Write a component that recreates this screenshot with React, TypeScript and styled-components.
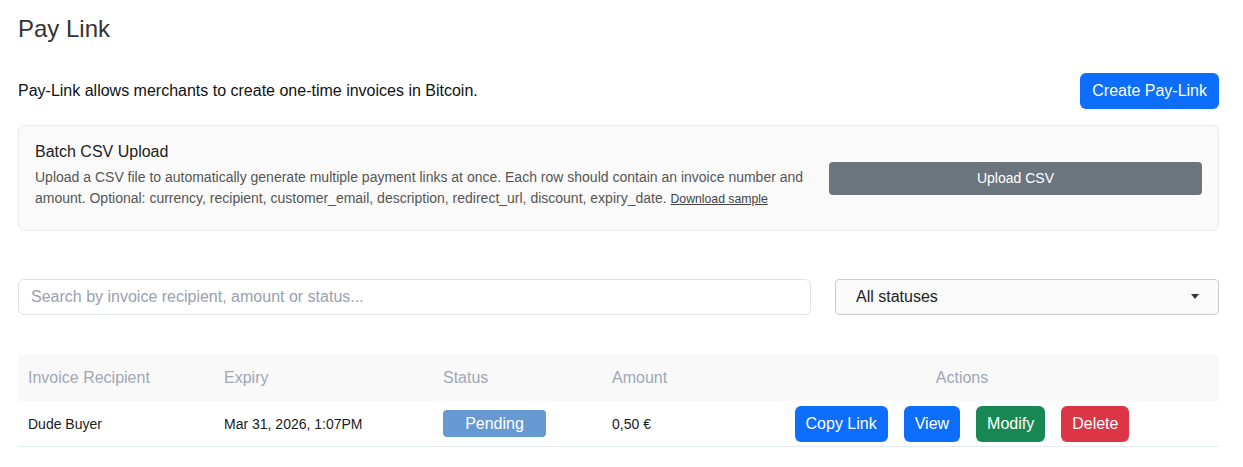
import styled, { createGlobalStyle } from "styled-components";

const GlobalStyle = createGlobalStyle`
  body {
    margin: 0;
    background: #ffffff;
    font-family: "Liberation Sans", Arial, Helvetica, sans-serif;
    color: #212529;
  }
`;

const Page = styled.div`
  width: 1201px;
  padding: 15px 0 0 18px;
`;

const Title = styled.h1`
  margin: 0;
  font-size: 24px;
  font-weight: 400;
  line-height: 1.2;
  color: #333333;
`;

const IntroRow = styled.div`
  display: flex;
  align-items: center;
  justify-content: space-between;
  margin-top: 29px;
`;

const IntroText = styled.p`
  margin: 0;
  font-size: 16px;
  line-height: 24px;
  color: #111111;
`;

const Button = styled.button<{ $variant?: "primary" | "secondary" | "success" | "danger" }>`
  border: none;
  border-radius: 6px;
  padding: 6px 11px;
  font-family: inherit;
  font-size: 16px;
  line-height: 24px;
  color: #ffffff;
  cursor: pointer;
  background: ${({ $variant }) =>
    $variant === "secondary"
      ? "#6c757d"
      : $variant === "success"
      ? "#198754"
      : $variant === "danger"
      ? "#dc3545"
      : "#0d6efd"};
`;

const CreateButton = styled(Button)`
  padding: 6px 12px;
`;

const UploadCard = styled.div`
  margin-top: 16px;
  background: #fafafa;
  border: 1px solid #ebebeb;
  border-radius: 6px;
  padding: 16px;
  display: grid;
  grid-template-columns: 770px 1fr;
  column-gap: 24px;
  align-items: center;
`;

const CardText = styled.div`
  padding-bottom: 4px;
`;

const CardTitle = styled.div`
  font-size: 16px;
  line-height: 19px;
  color: #222222;
  margin-bottom: 6px;
`;

const CardDesc = styled.p`
  margin: 0;
  font-size: 14px;
  line-height: 21px;
  color: #555555;
`;

const SampleLink = styled.a`
  font-size: 12.25px;
  color: #444444;
  text-decoration: underline;
`;

const UploadButton = styled(Button)`
  width: 100%;
  font-size: 14px;
  line-height: 21px;
  border-radius: 4px;
  margin-top: 1px;
`;

const FilterRow = styled.div`
  margin-top: 48px;
  display: grid;
  grid-template-columns: 793px 1fr;
  column-gap: 24px;
`;

const SearchInput = styled.input`
  box-sizing: border-box;
  height: 36px;
  width: 100%;
  border: 1px solid #dfe2e6;
  border-radius: 6px;
  padding: 0 12px;
  font-family: inherit;
  font-size: 16px;
  color: #212529;
  outline: none;
  &::placeholder {
    color: #9aa1ad;
  }
`;

const SelectBox = styled.div`
  box-sizing: border-box;
  height: 36px;
  border: 1px solid #cccccc;
  border-radius: 4px;
  background: #fafafa;
  padding: 0 19px 0 20px;
  display: flex;
  align-items: center;
  justify-content: space-between;
  font-size: 16px;
  color: #222222;
`;

const Caret = styled.span`
  width: 0;
  height: 0;
  border-left: 4.5px solid transparent;
  border-right: 4.5px solid transparent;
  border-top: 5px solid #333333;
`;

const Table = styled.table`
  margin-top: 40px;
  width: 100%;
  border-collapse: collapse;
  table-layout: fixed;
`;

const HeadCell = styled.th<{ $center?: boolean; $width?: number }>`
  box-sizing: border-box;
  background: #f9f9f9;
  height: 46px;
  padding: 0 10px;
  font-size: 16px;
  font-weight: 400;
  color: #a0a7b5;
  text-align: ${({ $center }) => ($center ? "center" : "left")};
  width: ${({ $width }) => ($width ? `${$width}px` : "auto")};
`;

const BodyRow = styled.tr`
  border-bottom: 1px solid #e4eaf2;
`;

const Cell = styled.td<{ $center?: boolean }>`
  box-sizing: border-box;
  height: 46px;
  padding: 0 10px;
  font-size: 14px;
  color: #1a1a1a;
  text-align: ${({ $center }) => ($center ? "center" : "left")};
`;

const Badge = styled.span`
  display: inline-block;
  width: 103px;
  height: 27px;
  line-height: 27px;
  border-radius: 4px;
  background: #6699d2;
  color: #ffffff;
  font-size: 16px;
  text-align: center;
  vertical-align: middle;
`;

const Actions = styled.div`
  display: flex;
  justify-content: center;
  gap: 16px;
`;

export default function App() {
  return (
    <>
      <GlobalStyle />
      <Page>
        <Title>Pay Link</Title>
        <IntroRow>
          <IntroText>Pay-Link allows merchants to create one-time invoices in Bitcoin.</IntroText>
          <CreateButton>Create Pay-Link</CreateButton>
        </IntroRow>

        <UploadCard>
          <CardText>
            <CardTitle>Batch CSV Upload</CardTitle>
            <CardDesc>
              Upload a CSV file to automatically generate multiple payment links at once. Each row
              should contain an invoice number and amount. Optional: currency, recipient,
              customer_email, description, redirect_url, discount, expiry_date.{" "}
              <SampleLink href="#">Download sample</SampleLink>
            </CardDesc>
          </CardText>
          <UploadButton $variant="secondary">Upload CSV</UploadButton>
        </UploadCard>

        <FilterRow>
          <SearchInput placeholder="Search by invoice recipient, amount or status..." />
          <SelectBox>
            All statuses
            <Caret />
          </SelectBox>
        </FilterRow>

        <Table>
          <thead>
            <tr>
              <HeadCell $width={196}>Invoice Recipient</HeadCell>
              <HeadCell $width={219}>Expiry</HeadCell>
              <HeadCell $width={169}>Status</HeadCell>
              <HeadCell $width={103}>Amount</HeadCell>
              <HeadCell $center>Actions</HeadCell>
            </tr>
          </thead>
          <tbody>
            <BodyRow>
              <Cell>Dude Buyer</Cell>
              <Cell>Mar 31, 2026, 1:07PM</Cell>
              <Cell>
                <Badge>Pending</Badge>
              </Cell>
              <Cell>0,50 €</Cell>
              <Cell $center>
                <Actions>
                  <Button>Copy Link</Button>
                  <Button>View</Button>
                  <Button $variant="success">Modify</Button>
                  <Button $variant="danger">Delete</Button>
                </Actions>
              </Cell>
            </BodyRow>
          </tbody>
        </Table>
      </Page>
    </>
  );
}
